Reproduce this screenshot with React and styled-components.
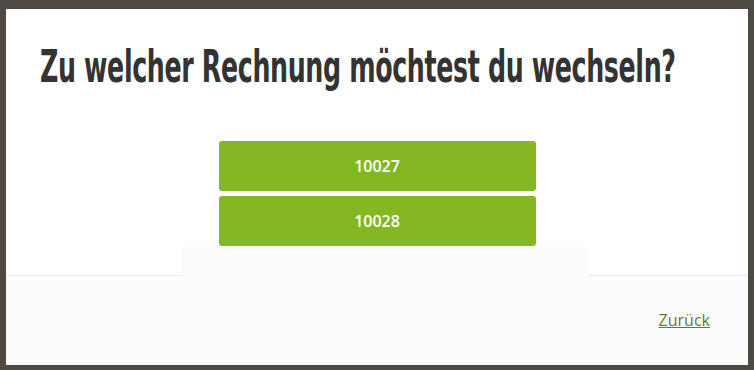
import React from 'react';
import styled, { createGlobalStyle } from 'styled-components';

const GlobalStyle = createGlobalStyle`
  html, body {
    margin: 0;
    padding: 0;
    background: #4f4944;
    overflow: hidden;
  }
  body {
    font-family: "Open Sans", "Liberation Sans", sans-serif;
  }
`;

const Overlay = styled.div`
  width: 754px;
  height: 370px;
  padding: 9px 6px 5px 6px;
  box-sizing: border-box;
  background: #4f4944;
`;

const Modal = styled.div`
  display: flex;
  flex-direction: column;
  width: 742px;
  height: 356px;
  background: #fcfcfc;
  overflow: hidden;
`;

const Body = styled.div`
  display: flex;
  flex-direction: column;
  align-items: center;
  background: #fff;
  border-bottom: 1px solid #ececec;
`;

const TitleRow = styled.div`
  align-self: stretch;
  height: 52px;
  margin-top: 32px;
  padding-left: 34px;
`;

const Title = styled.h1`
  display: inline-block;
  margin: 0;
  font-family: "DejaVu Sans Condensed", "DejaVu Sans", sans-serif;
  font-weight: 700;
  font-size: 44px;
  line-height: 52px;
  letter-spacing: -0.6px;
  color: #333;
  white-space: nowrap;
  transform: scaleX(0.64);
  transform-origin: left center;
`;

const Choices = styled.div`
  display: flex;
  flex-direction: column;
  gap: 5px;
  width: 317px;
  margin-top: 48px;
`;

const Choice = styled.button`
  height: 50px;
  border: none;
  border-radius: 3px;
  background: #84b822;
  color: #fff;
  font-family: "Open Sans", "Liberation Sans", sans-serif;
  font-weight: 600;
  font-size: 16px;
  cursor: pointer;
`;

const Tail = styled.div`
  width: 406px;
  height: 30px;
  margin: 0 0 -1px 16px;
  background: #fcfcfc;
`;

const Footer = styled.div`
  flex: 1;
  display: flex;
  align-items: center;
  justify-content: flex-end;
  padding: 0 38px 2px 0;
`;

const BackLink = styled.a`
  font-family: "Open Sans", "Liberation Sans", sans-serif;
  font-size: 16px;
  color: #5c7d2c;
  text-decoration: underline;
  cursor: pointer;
`;

export default function App() {
  const invoices = ['10027', '10028'];
  return (
    <>
      <GlobalStyle />
      <Overlay>
        <Modal>
          <Body>
            <TitleRow>
              <Title>Zu welcher Rechnung möchtest du wechseln?</Title>
            </TitleRow>
            <Choices>
              {invoices.map((n) => (
                <Choice key={n}>{n}</Choice>
              ))}
            </Choices>
            <Tail />
          </Body>
          <Footer>
            <BackLink>Zurück</BackLink>
          </Footer>
        </Modal>
      </Overlay>
    </>
  );
}
